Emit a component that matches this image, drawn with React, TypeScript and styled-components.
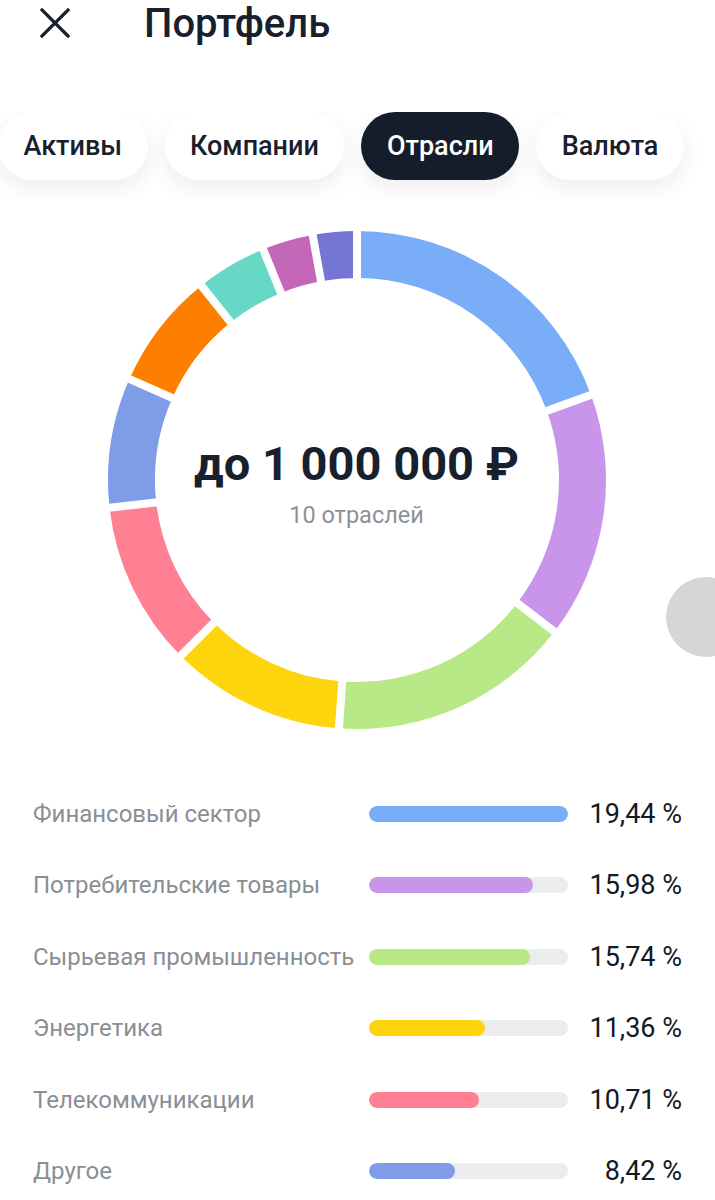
import React from "react";
import styled, { createGlobalStyle } from "styled-components";

const GlobalStyle = createGlobalStyle`
  html, body {
    margin: 0;
    padding: 0;
    background: #ffffff;
  }
  body {
    font-family: Roboto, "Noto Sans", "Liberation Sans", sans-serif;
    color: #18202d;
    overflow: hidden;
  }
`;

const sectors = [
  { name: "Финансовый сектор", value: 19.44, color: "#7aadf7" },
  { name: "Потребительские товары", value: 15.98, color: "#c995eb" },
  { name: "Сырьевая промышленность", value: 15.74, color: "#b9e986" },
  { name: "Энергетика", value: 11.36, color: "#fed50c" },
  { name: "Телекоммуникации", value: 10.71, color: "#ff7f93" },
  { name: "Другое", value: 8.42, color: "#7f9de7" },
  { name: "", value: 7.6, color: "#fe7f00" },
  { name: "", value: 4.6, color: "#67d8c5" },
  { name: "", value: 3.3, color: "#c467b9" },
  { name: "", value: 2.85, color: "#7575d6" },
];

const tabs = ["Активы", "Компании", "Отрасли", "Валюта"];

const CX = 250;
const CY = 250;
const R_OUT = 249;
const R_IN = 202;

function pt(angle: number, r: number) {
  const a = (angle * Math.PI) / 180;
  return [CX + r * Math.sin(a), CY - r * Math.cos(a)];
}

function sectorPath(a0: number, a1: number) {
  const [x0, y0] = pt(a0, R_OUT);
  const [x1, y1] = pt(a1, R_OUT);
  const [x2, y2] = pt(a1, R_IN);
  const [x3, y3] = pt(a0, R_IN);
  const large = a1 - a0 > 180 ? 1 : 0;
  return `M${x0} ${y0} A${R_OUT} ${R_OUT} 0 ${large} 1 ${x1} ${y1} L${x2} ${y2} A${R_IN} ${R_IN} 0 ${large} 0 ${x3} ${y3} Z`;
}

function Donut() {
  let acc = 0;
  const bounds: number[] = [];
  const parts = sectors.map((s, i) => {
    const a0 = acc;
    acc += (s.value / 100) * 360;
    bounds.push(a0);
    return <path key={i} d={sectorPath(a0, acc)} fill={s.color} />;
  });
  return (
    <svg width="500" height="500" viewBox="0 0 500 500">
      {parts}
      {bounds.map((a, i) => {
        const [x0, y0] = pt(a, R_IN - 4);
        const [x1, y1] = pt(a, R_OUT + 4);
        return (
          <line key={i} x1={x0} y1={y0} x2={x1} y2={y1} stroke="#fff" strokeWidth="8" />
        );
      })}
    </svg>
  );
}

export default function App() {
  const max = Math.max(...sectors.map((s) => s.value));
  return (
    <Page>
      <GlobalStyle />
      <Header>
        <CloseButton aria-label="close">
          <svg width="30" height="30" viewBox="0 0 30 30">
            <path d="M2 2 L28 28 M28 2 L2 28" stroke="#18202d" strokeWidth="3.2" strokeLinecap="square" />
          </svg>
        </CloseButton>
        <Title>Портфель</Title>
      </Header>

      <TabsScroll>
        <TabsTrack>
          {tabs.map((t) => (
            <Tab key={t} $active={t === "Отрасли"}>
              {t}
            </Tab>
          ))}
        </TabsTrack>
      </TabsScroll>

      <ChartArea>
        <ChartStack>
          <Donut />
          <ChartCenter>
            <Amount>до 1 000 000 ₽</Amount>
            <Caption>10 отраслей</Caption>
          </ChartCenter>
        </ChartStack>
      </ChartArea>

      <Legend>
        {sectors
          .filter((s) => s.name)
          .map((s) => (
            <LegendRow key={s.name}>
              <LegendLabel>{s.name}</LegendLabel>
              <Track>
                <Fill $color={s.color} style={{ width: `${(s.value / max) * 100}%` }} />
              </Track>
              <Percent>{s.value.toFixed(2).replace(".", ",")} %</Percent>
            </LegendRow>
          ))}
      </Legend>

      <FloatingDot />
    </Page>
  );
}

const Page = styled.div`
  position: relative;
  width: 715px;
  height: 1200px;
  overflow: hidden;
  background: #fff;
`;

const Header = styled.div`
  display: flex;
  align-items: center;
  height: 48px;
  padding-left: 40px;
`;

const CloseButton = styled.button`
  display: flex;
  align-items: center;
  justify-content: center;
  width: 30px;
  height: 30px;
  padding: 0;
  border: 0;
  background: none;
  margin-top: -3px;
`;

const Title = styled.h1`
  margin: 0 0 0 74px;
  font-size: 40px;
  font-weight: 500;
  line-height: 48px;
  color: #18202d;
`;

const TabsScroll = styled.div`
  margin-top: 64px;
  overflow: hidden;
  padding-bottom: 20px;
`;

const TabsTrack = styled.div`
  display: flex;
  gap: 17px;
  margin-left: -2px;
`;

const Tab = styled.div<{ $active?: boolean }>`
  flex: none;
  height: 68px;
  padding: 0 25.5px;
  display: flex;
  align-items: center;
  border-radius: 34px;
  font-size: 27px;
  font-weight: 500;
  background: ${(p) => (p.$active ? "#151d2b" : "#ffffff")};
  color: ${(p) => (p.$active ? "#ffffff" : "#18202d")};
  box-shadow: 0 8px 22px rgba(20, 30, 45, 0.08);
`;

const ChartArea = styled.div`
  display: flex;
  justify-content: center;
  padding-top: 30px;
  padding-right: 2px;
`;

const ChartStack = styled.div`
  display: grid;
  & > * {
    grid-area: 1 / 1;
  }
`;

const ChartCenter = styled.div`
  display: flex;
  flex-direction: column;
  align-items: center;
  justify-content: center;
  padding-top: 4px;
`;

const Amount = styled.div`
  font-size: 47px;
  font-weight: 700;
  color: #18202d;
  line-height: 56px;
`;

const Caption = styled.div`
  margin-top: 9px;
  font-size: 23.5px;
  color: #8d9198;
`;

const Legend = styled.div`
  display: flex;
  flex-direction: column;
  padding: 48px 33px 0 33px;
`;

const LegendRow = styled.div`
  display: grid;
  grid-template-columns: 336px 199px 1fr;
  align-items: center;
  height: 71.5px;
`;

const LegendLabel = styled.div`
  font-size: 24px;
  color: #8a8e95;
  white-space: nowrap;
`;

const Track = styled.div`
  height: 16px;
  border-radius: 8px;
  background: #ebecee;
  overflow: hidden;
`;

const Fill = styled.div<{ $color: string }>`
  height: 100%;
  border-radius: 8px;
  background: ${(p) => p.$color};
`;

const Percent = styled.div`
  text-align: right;
  font-size: 27px;
  font-weight: 400;
  color: #121925;
  white-space: nowrap;
`;

const FloatingDot = styled.div`
  position: absolute;
  top: 577px;
  right: -31px;
  width: 80px;
  height: 80px;
  border-radius: 50%;
  background: #d6d6d6;
`;
